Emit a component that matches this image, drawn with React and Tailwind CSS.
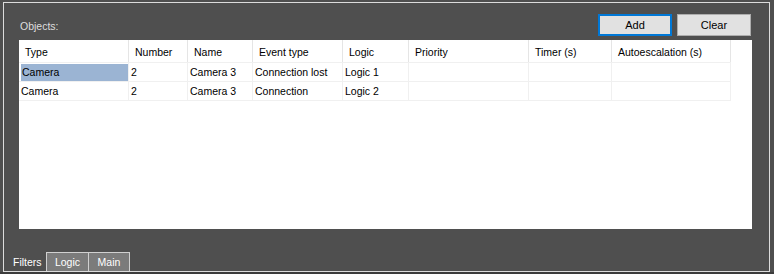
import React from "react";

const columns = [
  { title: "Type", w: "w-[110px]" },
  { title: "Number", w: "w-[59px]" },
  { title: "Name", w: "w-[65px]" },
  { title: "Event type", w: "w-[90px]" },
  { title: "Logic", w: "w-[66px]" },
  { title: "Priority", w: "w-[120px]" },
  { title: "Timer (s)", w: "w-[83px]" },
  { title: "Autoescalation (s)", w: "w-[119px]" },
];

const rows = [
  ["Camera", "2", "Camera 3", "Connection lost", "Logic 1", "", "", ""],
  ["Camera", "2", "Camera 3", "Connection", "Logic 2", "", "", ""],
];

const App = () => {
  return (
    <div
      className="w-[774px] h-[274px] bg-[#3c3c3c] text-[10.5px] leading-none"
      style={{ fontFamily: '"Liberation Sans", Arial, sans-serif' }}
    >
      <div className="h-[272px] bg-[#4f4f4f] pt-[2px] pl-[3px] pr-[4px]">
        <div className="h-[270px] border border-[#dcdcdc] flex flex-col pl-[15px] pr-[17px] pt-[11px]">
          <div className="flex items-center justify-between h-[22px]">
            <span className="text-[#dedede] pl-[1px] pt-[2px]">Objects:</span>
            <div className="flex gap-[5px] pr-[1px]">
              <button className="w-[74px] h-[22px] bg-[#e1e1e1] border-2 border-[#0078d7] text-black text-[11px]">
                Add
              </button>
              <button className="w-[74px] h-[22px] bg-[#e1e1e1] border border-[#adadad] text-black text-[11px]">
                Clear
              </button>
            </div>
          </div>

          <div className="mt-[4px] h-[189px] w-[733px] bg-white">
            <div className="flex h-[23px] border-b border-[#f0f0f0] w-[712px]">
              {columns.map((c) => (
                <div
                  key={c.title}
                  className={`${c.w} h-full border-r border-[#e5e5e5] pl-[6px] pt-[2px] flex items-center text-black`}
                >
                  {c.title}
                </div>
              ))}
            </div>
            {rows.map((r, i) => (
              <div key={i} className="flex h-[19px] w-[712px] border-b border-[#f0f0f0]">
                {r.map((cell, j) => (
                  <div
                    key={j}
                    className={`${columns[j].w} h-full border-r border-[#f0f0f0] ${j === 0 ? "pl-[2px] pt-[1px]" : "pl-[2px]"}`}
                  >
                    {i === 0 && j === 0 ? (
                      <div className="h-[17px] bg-[#9bb4d3] flex items-center pl-[1px] text-black">{cell}</div>
                    ) : (
                      <div className="h-full flex items-center text-black">{cell}</div>
                    )}
                  </div>
                ))}
              </div>
            ))}
          </div>

          <div className="flex-1" />

          <div className="flex h-[19px] -ml-[15px]">
            <div className="w-[42px] flex items-center pl-[9px] pt-[1px] text-white">Filters</div>
            <div className="w-[42px] h-full bg-[#7b7b7b] border-t border-l border-[#d0d0d0] flex items-center justify-center pt-[1px] text-white">
              Logic
            </div>
            <div className="w-[42px] h-full bg-[#7b7b7b] border-t border-l border-r border-[#d0d0d0] flex items-center justify-center pt-[1px] text-white">
              Main
            </div>
          </div>
        </div>
      </div>
    </div>
  );
};

export default App;
